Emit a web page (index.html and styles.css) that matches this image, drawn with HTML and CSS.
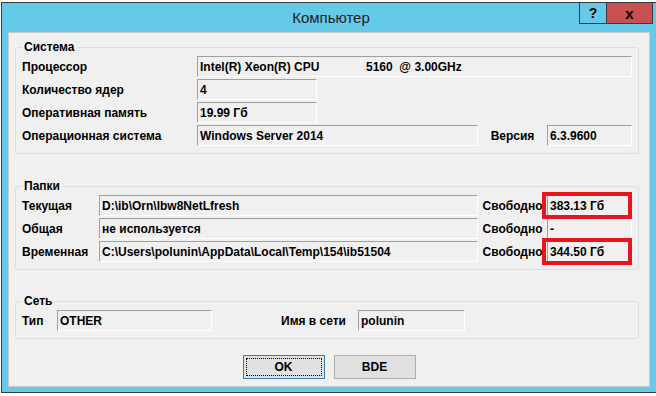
FILE: index.html
```html
<!DOCTYPE html>
<html>

<head>
    <meta charset="utf-8" />
    <title>Компьютер</title>
    <link rel="stylesheet" href="styles.css">
</head>

<body>
    <div class="window">
        <div class="titlebar">
            <div class="title">Компьютер</div>
            <div class="controls">
                <span class="ctl help">?</span>
                <span class="ctl close">x</span>
            </div>
        </div>

        <div class="client">
            <fieldset class="group system">
                <legend>Система</legend>
                <div class="row">
                    <span class="lbl">Процессор</span>
                    <span class="field f-cpu">Intel(R) Xeon(R) CPU              5160  @ 3.00GHz</span>
                </div>
                <div class="row">
                    <span class="lbl">Количество ядер</span>
                    <span class="field f-short">4</span>
                </div>
                <div class="row">
                    <span class="lbl">Оперативная память</span>
                    <span class="field f-short">19.99 Гб</span>
                </div>
                <div class="row">
                    <span class="lbl">Операционная система</span>
                    <span class="field f-path">Windows Server 2014</span>
                    <span class="side">Версия</span>
                    <span class="field f-side">6.3.9600</span>
                </div>
            </fieldset>

            <fieldset class="group folders">
                <legend>Папки</legend>
                <div class="row">
                    <span class="lbl">Текущая</span>
                    <span class="field f-path">D:\ib\Orn\lbw8NetLfresh</span>
                    <span class="side">Свободно</span>
                    <span class="marked">
                        <span class="field f-side">383.13 Гб</span>
                        <span class="mark"></span>
                    </span>
                </div>
                <div class="row">
                    <span class="lbl">Общая</span>
                    <span class="field f-path">не используется</span>
                    <span class="side">Свободно</span>
                    <span class="field f-side">-</span>
                </div>
                <div class="row">
                    <span class="lbl">Временная</span>
                    <span class="field f-path">C:\Users\polunin\AppData\Local\Temp\154\ib51504</span>
                    <span class="side">Свободно</span>
                    <span class="marked">
                        <span class="field f-side">344.50 Гб</span>
                        <span class="mark"></span>
                    </span>
                </div>
            </fieldset>

            <fieldset class="group network">
                <legend>Сеть</legend>
                <div class="row">
                    <span class="lbl">Тип</span>
                    <span class="field f-type">OTHER</span>
                    <span class="lbl-host">Имя в сети</span>
                    <span class="field f-host">polunin</span>
                </div>
            </fieldset>

            <div class="buttons">
                <button class="btn btn-default"><span>OK</span></button>
                <button class="btn">BDE</button>
            </div>
        </div>
    </div>
</body>

</html>
```

FILE: styles.css
```css
html, body {
    margin: 0;
    overflow: hidden;
    background-color: #ffffff;
    font-family: 'Liberation Sans', Arial, sans-serif;
}

.window {
    width: 658px;
    margin: 2px 0 0 1px;
    border: 1px solid #3b3b3b;
    background-color: #65c9e9;
    padding-bottom: 5px;
}

/* title bar */

.titlebar {
    display: grid;
    height: 29px;
}

.title, .controls {
    grid-area: 1 / 1;
}

.title {
    text-align: center;
    font-size: 15px;
    line-height: 29px;
    color: #1e1e1e;
}

.controls {
    justify-self: end;
    display: flex;
    margin: -1px 7px 0 0;
    height: 22px;
}

.ctl {
    display: flex;
    align-items: center;
    justify-content: center;
    border: 1px solid #3b3b3b;
    font-weight: bold;
    font-size: 14px;
    color: #000;
}

.help {
    width: 26px;
    border-right: none;
}

.close {
    width: 45px;
    background-color: #c75050;
    font-size: 15px;
}

/* client area */

.client {
    width: 640px;
    margin-left: 6px;
    border: 1px solid #c9c9c9;
    background-color: #f0f0f0;
    padding: 7px 0 7px 0;
    font-size: 12px;
    font-weight: bold;
    color: #000;
}

.group {
    margin: 0 10px 0 6px;
    padding: 2px 6px 7px 6px;
    border: 1px solid #d6dde3;
    border-radius: 3px;
    min-width: 0;
}

.group legend {
    padding: 0 2px;
    line-height: 14px;
}

.folders {
    margin-top: 25px;
}

.network {
    margin-top: 24px;
}

.row {
    display: flex;
    align-items: center;
    height: 21px;
}

.row + .row {
    margin-top: 2px;
}

.lbl {
    flex: none;
}

.system .lbl {
    width: 175px;
}

.folders .lbl {
    width: 77px;
}

.network .lbl {
    width: 35px;
}

.field {
    display: flex;
    align-items: center;
    box-sizing: border-box;
    height: 21px;
    padding-left: 2px;
    border: 1px solid;
    border-color: #a0a0a0 #ffffff #ffffff #a0a0a0;
    white-space: pre;
    overflow: hidden;
}

.f-cpu {
    width: 435px;
}

.f-short {
    width: 120px;
}

.f-path {
    width: 281px;
}

.folders .f-path {
    width: 379px;
}

.side {
    width: 69px;
    text-align: center;
}

.f-side {
    width: 85px;
}

.f-type {
    width: 155px;
}

.lbl-host {
    margin-left: 69px;
    width: 77px;
}

.f-host {
    width: 107px;
}

/* red annotation frames */

.marked {
    position: relative;
    display: flex;
}

.mark {
    position: absolute;
    left: -5px;
    top: -3px;
    right: 0;
    bottom: -3px;
    border: 4px solid #e8151f;
}

/* buttons */

.buttons {
    display: flex;
    justify-content: center;
    gap: 9px;
    margin-top: 16px;
}

.btn {
    box-sizing: border-box;
    width: 82px;
    height: 24px;
    padding: 0;
    border: 1px solid #adadad;
    background-color: #e1e1e1;
    font-family: inherit;
    font-size: 12px;
    font-weight: bold;
    color: #000;
}

.btn-default {
    border-color: #3c7fb1;
    padding: 2px;
}

.btn-default span {
    display: flex;
    align-items: center;
    justify-content: center;
    height: 100%;
    outline: 1px dotted #000;
    outline-offset: -1px;
}
```
